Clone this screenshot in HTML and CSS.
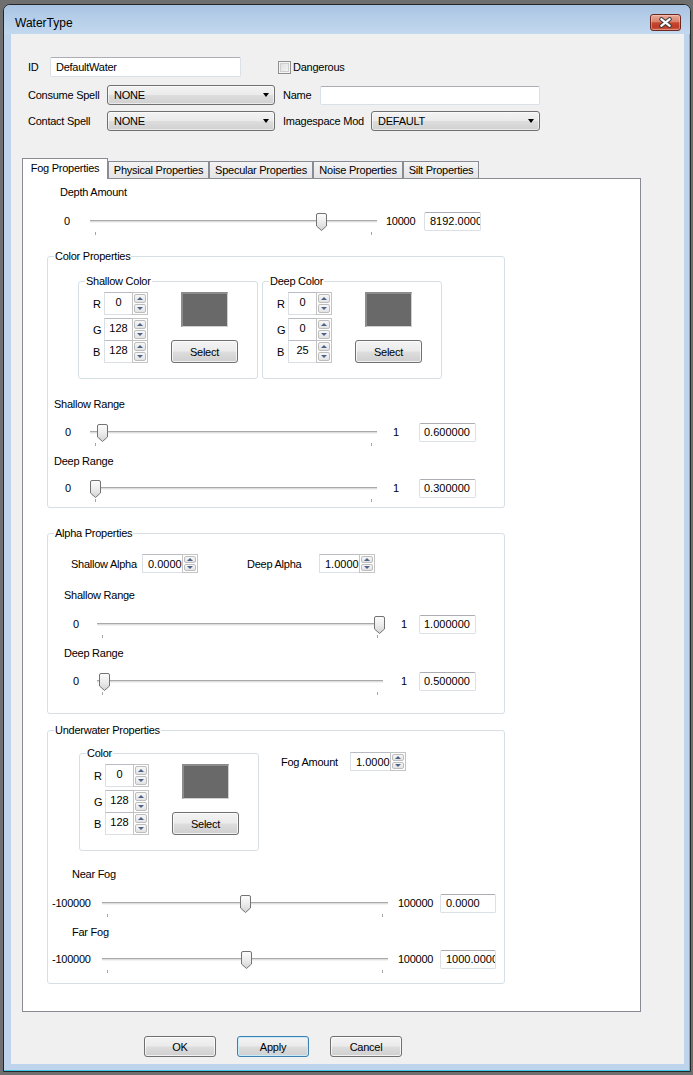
FILE: index.html
```html
<!DOCTYPE html>
<html>
<head>
<meta charset="utf-8">
<title>WaterType</title>
<link rel="stylesheet" href="styles.css">
</head>
<body>
<svg class="defs" width="0" height="0" aria-hidden="true">
  <defs>
    <linearGradient id="tg" x1="0" y1="0" x2="0" y2="1">
      <stop offset="0" stop-color="#fcfcfc"/>
      <stop offset="0.5" stop-color="#ececec"/>
      <stop offset="1" stop-color="#d2d2d2"/>
    </linearGradient>
    <symbol id="thumb" viewBox="0 0 11 18">
      <path d="M0.5 2 Q0.5 0.5 2 0.5 H9 Q10.5 0.5 10.5 2 V13 L5.5 17.5 L0.5 13 Z" fill="url(#tg)" stroke="#737373"/>
    </symbol>
  </defs>
</svg>
<div class="desktop">
<div class="window">
  <div class="titlebar">
    <span class="title">WaterType</span>
    <div class="close">
      <svg width="31" height="17" viewBox="0 0 31 17">
        <path d="M11.3 5.2 L19.7 11.8 M19.7 5.2 L11.3 11.8" stroke="#3a3a3a" stroke-width="4.2" stroke-linecap="round"/>
        <path d="M11.3 5.2 L19.7 11.8 M19.7 5.2 L11.3 11.8" stroke="#ffffff" stroke-width="2.2" stroke-linecap="round"/>
      </svg>
    </div>
  </div>
  <div class="client">
    <div class="form-row r1">
      <span class="lbl w-id">ID</span>
      <div class="textbox tb-id">DefaultWater</div>
      <span class="check"></span>
      <span class="lbl check-lbl">Dangerous</span>
    </div>
    <div class="form-row r2">
      <span class="lbl w-spell">Consume Spell</span>
      <div class="combo cb-spell"><span>NONE</span><i class="caret"></i></div>
      <span class="lbl w-name">Name</span>
      <div class="textbox tb-name"></div>
    </div>
    <div class="form-row r3">
      <span class="lbl w-spell">Contact Spell</span>
      <div class="combo cb-spell"><span>NONE</span><i class="caret"></i></div>
      <span class="lbl w-ism">Imagespace Mod</span>
      <div class="combo cb-ism"><span>DEFAULT</span><i class="caret"></i></div>
    </div>

    <div class="tabs">
      <div class="tabbar">
        <div class="tab active t-fog">Fog Properties</div>
        <div class="tab t-phys">Physical Properties</div>
        <div class="tab t-spec">Specular Properties</div>
        <div class="tab t-noise">Noise Properties</div>
        <div class="tab t-silt">Silt Properties</div>
      </div>
      <div class="pane">
        <div class="line depth-lbl">Depth Amount</div>
        <div class="srow d depth-row">
          <span class="min">0</span>
          <div class="slider"><svg class="thumb" style="left:226px" width="11" height="18"><use href="#thumb"/></svg></div>
          <span class="max">10000</span>
          <div class="val">8192.0000</div>
        </div>

        <div class="group g-color">
          <div class="gtitle">Color Properties</div>
          <div class="subrow">
            <div class="sub">
              <div class="gtitle">Shallow Color</div>
              <div class="sub-body">
                <div class="rgb">
                  <div class="rgb-row"><span class="rl">R</span><div class="spin rspin"><div class="sv">0</div><div class="sbtns"><div class="sb"><i class="up"></i></div><div class="sb"><i class="dn"></i></div></div></div></div>
                  <div class="rgb-row rg"><span class="rl">G</span><div class="spin rspin"><div class="sv">128</div><div class="sbtns"><div class="sb"><i class="up"></i></div><div class="sb"><i class="dn"></i></div></div></div></div>
                  <div class="rgb-row rb"><span class="rl">B</span><div class="spin rspin"><div class="sv">128</div><div class="sbtns"><div class="sb"><i class="up"></i></div><div class="sb"><i class="dn"></i></div></div></div></div>
                </div>
                <div class="pick"><div class="swatch"></div><div class="btn sel">Select</div></div>
              </div>
            </div>
            <div class="sub">
              <div class="gtitle">Deep Color</div>
              <div class="sub-body">
                <div class="rgb">
                  <div class="rgb-row"><span class="rl">R</span><div class="spin rspin"><div class="sv">0</div><div class="sbtns"><div class="sb"><i class="up"></i></div><div class="sb"><i class="dn"></i></div></div></div></div>
                  <div class="rgb-row rg"><span class="rl">G</span><div class="spin rspin"><div class="sv">0</div><div class="sbtns"><div class="sb"><i class="up"></i></div><div class="sb"><i class="dn"></i></div></div></div></div>
                  <div class="rgb-row rb"><span class="rl">B</span><div class="spin rspin"><div class="sv">25</div><div class="sbtns"><div class="sb"><i class="up"></i></div><div class="sb"><i class="dn"></i></div></div></div></div>
                </div>
                <div class="pick"><div class="swatch"></div><div class="btn sel">Select</div></div>
              </div>
            </div>
          </div>
          <div class="line glbl c-lbl1">Shallow Range</div>
          <div class="srow c r-a">
            <span class="min">0</span>
            <div class="slider"><svg class="thumb" style="left:7px" width="11" height="18"><use href="#thumb"/></svg></div>
            <span class="max">1</span>
            <div class="val">0.600000</div>
          </div>
          <div class="line glbl c-lbl2">Deep Range</div>
          <div class="srow c r-b">
            <span class="min">0</span>
            <div class="slider"><svg class="thumb" style="left:0px" width="11" height="18"><use href="#thumb"/></svg></div>
            <span class="max">1</span>
            <div class="val">0.300000</div>
          </div>
        </div>

        <div class="group g-alpha">
          <div class="gtitle">Alpha Properties</div>
          <div class="alpha-row">
            <span class="lbl al1">Shallow Alpha</span>
            <div class="spin nspin"><div class="sv">0.0000</div><div class="sbtns"><div class="sb"><i class="up"></i></div><div class="sb"><i class="dn"></i></div></div></div>
            <span class="lbl al2">Deep Alpha</span>
            <div class="spin nspin"><div class="sv">1.0000</div><div class="sbtns"><div class="sb"><i class="up"></i></div><div class="sb"><i class="dn"></i></div></div></div>
          </div>
          <div class="line glbl a-lbl1">Shallow Range</div>
          <div class="srow a r-a">
            <span class="min">0</span>
            <div class="slider"><svg class="thumb" style="left:277px" width="11" height="18"><use href="#thumb"/></svg></div>
            <span class="max">1</span>
            <div class="val">1.000000</div>
          </div>
          <div class="line glbl a-lbl2">Deep Range</div>
          <div class="srow a r-b">
            <span class="min">0</span>
            <div class="slider"><svg class="thumb" style="left:2px" width="11" height="18"><use href="#thumb"/></svg></div>
            <span class="max">1</span>
            <div class="val">0.500000</div>
          </div>
        </div>

        <div class="group g-under">
          <div class="gtitle">Underwater Properties</div>
          <div class="under-row">
            <div class="sub">
              <div class="gtitle">Color</div>
              <div class="sub-body">
                <div class="rgb">
                  <div class="rgb-row"><span class="rl">R</span><div class="spin rspin"><div class="sv">0</div><div class="sbtns"><div class="sb"><i class="up"></i></div><div class="sb"><i class="dn"></i></div></div></div></div>
                  <div class="rgb-row rg"><span class="rl">G</span><div class="spin rspin"><div class="sv">128</div><div class="sbtns"><div class="sb"><i class="up"></i></div><div class="sb"><i class="dn"></i></div></div></div></div>
                  <div class="rgb-row rb"><span class="rl">B</span><div class="spin rspin"><div class="sv">128</div><div class="sbtns"><div class="sb"><i class="up"></i></div><div class="sb"><i class="dn"></i></div></div></div></div>
                </div>
                <div class="pick"><div class="swatch"></div><div class="btn sel">Select</div></div>
              </div>
            </div>
            <div class="fog-row">
              <span class="lbl fog-lbl">Fog Amount</span>
              <div class="spin nspin"><div class="sv">1.0000</div><div class="sbtns"><div class="sb"><i class="up"></i></div><div class="sb"><i class="dn"></i></div></div></div>
            </div>
          </div>
          <div class="line glbl u-lbl1">Near Fog</div>
          <div class="srow u r-a">
            <span class="min">-100000</span>
            <div class="slider"><svg class="thumb" style="left:138px" width="11" height="18"><use href="#thumb"/></svg></div>
            <span class="max">100000</span>
            <div class="val">0.0000</div>
          </div>
          <div class="line glbl u-lbl2">Far Fog</div>
          <div class="srow u r-b">
            <span class="min">-100000</span>
            <div class="slider"><svg class="thumb" style="left:139px" width="11" height="18"><use href="#thumb"/></svg></div>
            <span class="max">100000</span>
            <div class="val">1000.0000</div>
          </div>
        </div>
      </div>
    </div>

    <div class="buttons">
      <div class="btn dlg">OK</div>
      <div class="btn dlg focus">Apply</div>
      <div class="btn dlg">Cancel</div>
    </div>
  </div>
</div>
</div>
</body>
</html>
```

FILE: styles.css
```css
* { box-sizing: border-box; }

html, body {
  margin: 0;
  padding: 0;
}

body {
  background: #6f6f6f;
  font-family: "Liberation Sans", Arial, sans-serif;
  font-size: 11px;
  letter-spacing: -0.25px;
  color: #000;
  width: 693px;
  height: 1075px;
  overflow: hidden;
}

.defs {
  display: block;
  width: 0;
  height: 0;
  overflow: hidden;
}

.desktop {
  padding: 4px 0 0 3px;
}

.window {
  width: 688px;
  border: 1px solid #252525;
  border-radius: 7px 7px 0 0;
  background: #bed4ec;
  box-shadow: inset -1px -1px 0 #3fc8ea;
  padding-bottom: 7px;
}

.titlebar {
  height: 29px;
  display: flex;
  align-items: flex-start;
  border-radius: 6px 6px 0 0;
  background: linear-gradient(#a8c3e1, #b9d0ea 55%, #c2d8ef);
  padding-left: 11px;
}

.title {
  font-size: 12px;
  letter-spacing: 0;
  line-height: 14px;
  margin-top: 11px;
  color: #000;
}

.close {
  margin: 9px 9px 0 auto;
  width: 31px;
  height: 17px;
  border: 1px solid #6e271e;
  border-radius: 3px;
  background: linear-gradient(#e9ab9b 0%, #d9826d 45%, #c8472f 52%, #bd3b25 80%, #cf6047 100%);
  box-shadow: inset 0 0 0 1px rgba(255, 220, 210, 0.4);
  display: flex;
  align-items: center;
  justify-content: center;
}

.close svg {
  display: block;
  margin: -1px;
}

.client {
  margin: 0 6px 0 7px;
  height: 1030px;
  background: #f0f0f0;
  padding-top: 23px;
}

/* ---------- top form ---------- */
.form-row {
  display: flex;
  align-items: center;
  padding-left: 17px;
  height: 20px;
}
.r2 { margin-top: 8px; }
.r3 { margin-top: 6px; }

.lbl {
  line-height: 14px;
  white-space: nowrap;
  flex: none;
}
.w-id { width: 22px; }
.w-spell { width: 79px; }
.w-name { width: 37px; margin-left: 8px; }
.w-ism { width: 88px; margin-left: 8px; }

.textbox {
  height: 19px;
  background: #fff;
  border: 1px solid #dbdfe6;
  border-top-color: #abadb3;
  border-radius: 2px;
  line-height: 17px;
  padding-left: 5px;
  white-space: nowrap;
  overflow: hidden;
}
.tb-id { width: 191px; height: 20px; line-height: 18px; }
.tb-name { width: 220px; }

.check {
  width: 13px;
  height: 13px;
  margin-left: 37px;
  border: 1px solid #8e8f8f;
  background: linear-gradient(135deg, #dcdcdc, #f8f8f8);
  box-shadow: inset 0 0 0 1px #f4f4f4, inset 0 0 0 2px #cfcfcf;
  flex: none;
}
.check-lbl { margin-left: 2px; }

.combo {
  height: 20px;
  border: 1px solid #707070;
  border-radius: 3px;
  background: linear-gradient(#f3f3f3 0%, #ebebeb 48%, #dddddd 52%, #d0d0d0 100%);
  box-shadow: inset 0 0 0 1px rgba(255, 255, 255, 0.55);
  display: flex;
  align-items: center;
  padding-left: 6px;
  line-height: 14px;
  flex: none;
}
.cb-spell { width: 168px; }
.cb-ism { width: 169px; }

.caret {
  margin-left: auto;
  margin-right: 5px;
  width: 0;
  height: 0;
  border-top: 4px solid #000;
  border-left: 3.5px solid transparent;
  border-right: 3.5px solid transparent;
}

/* ---------- tabs ---------- */
.tabs {
  margin: 27px 0 0 11px;
  width: 619px;
}

.tabbar {
  display: flex;
  align-items: flex-end;
  height: 21px;
  margin-bottom: -1px;
  position: relative;
  z-index: 1;
}

.tab {
  height: 18px;
  border: 1px solid #898c95;
  background: linear-gradient(#f4f4f4, #e4e4e4);
  line-height: 16px;
  text-align: center;
  white-space: nowrap;
  flex: none;
}
.tab.active {
  height: 21px;
  border-bottom: none;
  background: #fff;
  line-height: 18px;
}
.t-fog { width: 86px; }
.t-phys { width: 101px; }
.t-spec { width: 104px; }
.t-noise { width: 90px; }
.t-silt { width: 76px; }

.pane {
  height: 834px;
  border: 1px solid #898c95;
  background: #fff;
  padding-left: 24px;
}

.line {
  line-height: 14px;
  height: 14px;
  white-space: nowrap;
}

.depth-lbl { margin: 6px 0 0 13px; }
.depth-row { margin-top: 12px; }

/* ---------- slider rows ---------- */
.srow {
  display: flex;
  align-items: center;
  height: 20px;
}
.srow .min, .srow .max {
  flex: none;
  line-height: 14px;
  white-space: nowrap;
}

.slider {
  position: relative;
  height: 20px;
  flex: none;
}
.slider::before {
  content: "";
  position: absolute;
  left: 0;
  right: 0;
  top: 9px;
  height: 3px;
  background: linear-gradient(#a9a9a9 0 1px, #dedede 1px 2px, #f2f2f2 2px);
}
.slider::after {
  content: "";
  position: absolute;
  left: 5px;
  right: 5px;
  top: 21px;
  height: 3px;
  background:
    linear-gradient(#a4a4a4, #a4a4a4) left top / 1px 100% no-repeat,
    linear-gradient(#a4a4a4, #a4a4a4) right top / 1px 100% no-repeat;
}
.thumb {
  position: absolute;
  top: 2px;
  z-index: 1;
  display: block;
}

.val {
  height: 19px;
  background: #fff;
  border: 1px solid #dbdfe6;
  border-top-color: #abadb3;
  border-radius: 2px;
  line-height: 17px;
  padding-left: 4px;
  white-space: nowrap;
  overflow: hidden;
  letter-spacing: 0;
  flex: none;
}

.srow.d { margin-left: 17px; }
.d .min { width: 26px; }
.d .slider { width: 287px; }
.d .max { margin-left: 9px; width: 38px; }
.d .val { width: 57px; padding-left: 5px; }

.srow.c { margin-left: 17px; }
.c .min { width: 25px; }
.c .slider { width: 287px; }
.c .max { margin-left: 16px; width: 26px; }
.c .val { width: 57px; }

.srow.a { margin-left: 25px; }
.a .min { width: 24px; }
.a .slider { width: 286px; }
.a .max { margin-left: 18px; width: 18px; }
.a .val { width: 57px; }

.srow.u { margin-left: 4px; }
.u .min { width: 50px; }
.u .slider { width: 286px; }
.u .max { margin-left: 10px; width: 42px; }
.u .val { width: 56px; padding-left: 5px; }

/* ---------- group boxes ---------- */
.group {
  width: 458px;
  border: 1px solid #d5dfe5;
  border-radius: 3px;
}
.gtitle {
  width: max-content;
  margin: -8px 0 0 6px;
  padding: 0 1px;
  background: #fff;
  line-height: 14px;
  height: 14px;
  white-space: nowrap;
}

.g-color { margin-top: 25px; padding-bottom: 9px; }
.g-alpha { margin-top: 25px; padding-bottom: 22px; }
.g-under { margin-top: 16px; padding-bottom: 14px; }

.subrow {
  display: flex;
  gap: 4px;
  margin: 18px 0 0 30px;
}

.c-lbl1 { margin: 18px 0 0 6px; }
.srow.c.r-a { margin-top: 11px; }
.c-lbl2 { margin: 12px 0 0 6px; }
.srow.c.r-b { margin-top: 10px; }

.alpha-row {
  display: flex;
  align-items: center;
  height: 19px;
  margin: 14px 0 0 23px;
}
.al1 { width: 71px; }
.al2 { width: 72px; margin-left: 49px; }

.a-lbl1 { margin: 15px 0 0 16px; }
.srow.a.r-a { margin-top: 12px; }
.a-lbl2 { margin: 12px 0 0 16px; }
.srow.a.r-b { margin-top: 11px; }

.under-row {
  display: flex;
  align-items: flex-start;
  margin: 16px 0 0 31px;
}
.fog-row {
  display: flex;
  align-items: center;
  height: 19px;
  margin: -1px 0 0 22px;
}
.fog-lbl { width: 69px; }

.u-lbl1 { margin: 16px 0 0 24px; }
.srow.u.r-a { margin-top: 12px; }
.u-lbl2 { margin: 12px 0 0 24px; }
.srow.u.r-b { margin-top: 10px; }

/* ---------- color sub groups ---------- */
.sub {
  width: 180px;
  height: 98px;
  border: 1px solid #d5dfe5;
  border-radius: 3px;
  flex: none;
}
.sub-body {
  display: flex;
  margin-top: 4px;
}
.rgb {
  display: flex;
  flex-direction: column;
}
.rgb-row {
  display: flex;
  align-items: center;
}
.rgb-row.rg { margin-top: 3px; }
.rgb-row.rb { margin-top: -1px; }
.rl {
  width: 11px;
  margin-left: 14px;
  line-height: 14px;
}

/* ---------- spin boxes ---------- */
.spin {
  display: flex;
  background: #fff;
  border: 1px solid #dbdfe6;
  border-top-color: #b9bcc2;
  flex: none;
}
.sv {
  flex: 1;
  overflow: hidden;
  white-space: nowrap;
  line-height: 14px;
  letter-spacing: 0;
}
.rspin { width: 44px; height: 23px; }
.rspin .sv {
  text-align: center;
  padding-top: 2px;
}
.nspin { width: 56px; height: 19px; }
.nspin .sv {
  padding: 2px 0 0 5px;
}

.sbtns {
  width: 16px;
  margin: -1px -1px -1px 0;
  border: 1px solid #c4c4c4;
  display: flex;
  flex-direction: column;
  padding: 1px;
  gap: 1px;
  background: #fff;
  flex: none;
}
.sb {
  flex: 1;
  border: 1px solid #bdbdbd;
  border-radius: 2px;
  background: linear-gradient(#f7f7f7, #e3e3e3);
  display: flex;
  align-items: center;
  justify-content: center;
}
.up, .dn {
  width: 0;
  height: 0;
  border-left: 3px solid transparent;
  border-right: 3px solid transparent;
}
.up { border-bottom: 3px solid #4f6289; }
.dn { border-top: 3px solid #4f6289; }

.pick {
  width: 67px;
  margin-left: 23px;
  display: flex;
  flex-direction: column;
  align-items: center;
}
.swatch {
  width: 47px;
  height: 35px;
  background: #696969;
  border-style: solid;
  border-width: 2px 1px 1px 2px;
  border-color: #8c8c8c #d0d0d0 #d0d0d0 #8c8c8c;
}

/* ---------- buttons ---------- */
.btn {
  border: 1px solid #707070;
  border-radius: 3px;
  background: linear-gradient(#f3f3f3 0%, #ebebeb 48%, #dddddd 52%, #cfcfcf 100%);
  box-shadow: inset 0 0 0 1px rgba(255, 255, 255, 0.7);
  display: flex;
  align-items: center;
  justify-content: center;
  line-height: 14px;
  white-space: nowrap;
}
.sel {
  width: 67px;
  height: 23px;
  margin-top: 13px;
}

.buttons {
  display: flex;
  gap: 21px;
  margin: 24px 0 0 133px;
}
.dlg {
  width: 72px;
  height: 21px;
}
.dlg.focus {
  border-color: #3c7fb1;
  box-shadow: inset 0 0 0 1px #c9ecfb;
}
```
